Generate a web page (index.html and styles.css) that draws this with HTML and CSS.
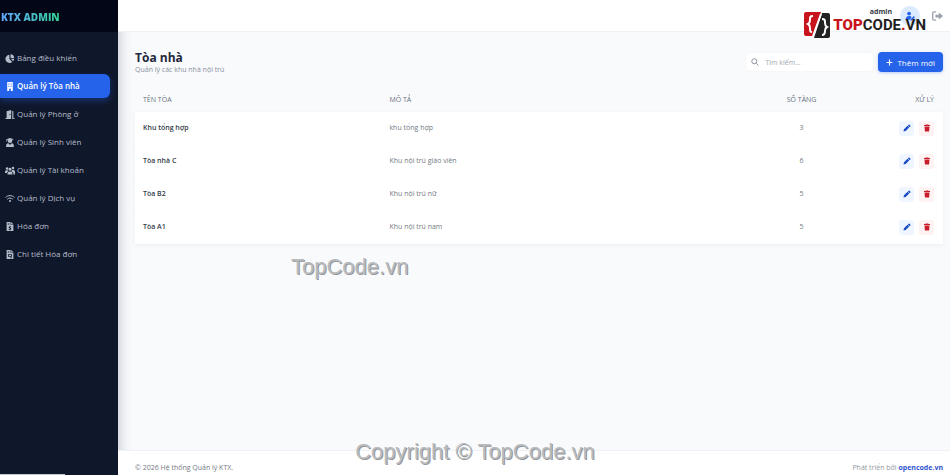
FILE: index.html
```html
<!DOCTYPE html>
<html lang="vi">
<head>
  <meta charset="UTF-8">
  <meta name="viewport" content="width=device-width, initial-scale=1.0">
  <title>KTX Admin</title>
  <link rel="stylesheet" href="styles.css">
</head>
<body>
  <!-- shared icons for the table rows -->
  <svg class="sprite" aria-hidden="true">
    <symbol id="pen" viewBox="0 0 16 16"><path d="M11.2 1.3a1.2 1.2 0 0 1 1.7 0l1.8 1.8a1.2 1.2 0 0 1 0 1.7l-1.5 1.5-3.5-3.5zM8.900 3.600l3.500 3.500-7 7L1 15l.900-4.400z"/></symbol>
    <symbol id="trash" viewBox="0 0 16 16"><path d="M5.500 1h5l.700 1H14v2H2V2h2.800zM3 5h10l-.700 9a1.500 1.500 0 0 1-1.500 1.200H5.200A1.500 1.500 0 0 1 3.700 14z"/></symbol>
  </svg>

  <div class="layout">
    <aside class="sidebar">
      <div class="brand"><span>KTX ADMIN</span></div>
      <nav class="menu">
        <a href="#" class="menu-item">
          <svg viewBox="0 0 16 16"><path d="M7 1.500V9l5 5A7.200 7.200 0 1 1 7 1.500zM9 .500A7 7 0 0 1 15.500 7H9zM9.500 8.500h6a7 7 0 0 1-2 4.500z"/></svg>
          Bảng điều khiển
        </a>
        <a href="#" class="menu-item active">
          <svg viewBox="0 0 16 16"><path fill-rule="evenodd" d="M3 0h10v16H9.500v-4h-3v4H3zM5 2.500v2h2v-2zm4 0v2h2v-2zM5 6.500v2h2v-2zm4 0v2h2v-2z"/></svg>
          Quản lý Tòa nhà
        </a>
        <a href="#" class="menu-item">
          <svg viewBox="0 0 16 16"><path fill-rule="evenodd" d="M2 2l8-2v16H0v-2h2zM7 7v2h1.500V7zM11 2h3v12h2v2h-4V4h-1z"/></svg>
          Quản lý Phòng ở
        </a>
        <a href="#" class="menu-item">
          <svg viewBox="0 0 16 16"><path d="M8 0l7 2-3 1v2a4 4 0 0 1-8 0V3l-1-.300V6H1.500V2zM5 9.500l3 3 3-3c3 .5 4 2.500 4 6.500H1c0-4 1-6 4-6.500z"/></svg>
          Quản lý Sinh viên
        </a>
        <a href="#" class="menu-item">
          <svg viewBox="0 0 20 16"><circle cx="4" cy="4" r="2.500"/><circle cx="10" cy="5.500" r="2.800"/><circle cx="16" cy="3" r="2.500"/><path d="M0 11c0-3 2-4 5-3.500L7 9c-2 1-3 3-3 4H0zM13 8c3-2 7-1 7 3v5h-3c0-4-1-5-4-6zM5 16c0-4 1-6 5-6s5 2 5 6z"/></svg>
          Quản lý Tài khoản
        </a>
        <a href="#" class="menu-item">
          <svg viewBox="0 0 20 16"><path class="stroke" d="M1 6c5-5 13-5 18 0M4.500 9.500c3-3 8-3 11 0"/><circle cx="10" cy="13" r="2"/></svg>
          Quản lý Dịch vụ
        </a>
        <a href="#" class="menu-item">
          <svg viewBox="0 0 16 16"><path fill-rule="evenodd" d="M2 0h7v5h5v11H2zM10 0l4 4h-4zM4 2v1h3V2zm0 2.500v1h3v-1zM7.300 7v1C5 8 5 11 7.500 11.500c1.500.300 1 1-.300 1L5.500 12v1.200l1.800.4V15h1.400v-1.400C11 13 11 10.500 8.500 10c-1.500-.300-1-.800 0-.800l1.500.3V8.300L8.700 8V7z"/></svg>
          Hóa đơn
        </a>
        <a href="#" class="menu-item">
          <svg viewBox="0 0 16 16"><path fill-rule="evenodd" d="M2 0h7v5h5v11H2zM10 0l4 4h-4zM4 2v1h3V2zm0 2.500v1h3v-1zM4.500 7.500V12h7V7.500zM6 9h4v1.500H6zM8 13.500v1h3.500v-1z"/></svg>
          Chi tiết Hóa đơn
        </a>
      </nav>
    </aside>

    <div class="main">
      <header class="topbar">
        <span class="user-name">admin</span>
        <span class="avatar">
          <svg viewBox="0 0 16 16"><circle cx="6.500" cy="4" r="3"/><path d="M1 14c0-4 2-6 5.500-6 2 0 3 .5 4 1.500L8 14zM9 13l5-5 2 2-5 5H9z"/></svg>
        </span>
        <button class="logout" aria-label="Đăng xuất">
          <svg viewBox="0 0 16 14"><path d="M6 1H3a2 2 0 0 0-2 2v8a2 2 0 0 0 2 2h3"/><path class="arrow" d="M5 5h5V2l6 5-6 5V9H5z"/></svg>
        </button>
      </header>

      <main class="content">
        <div class="page-head">
          <div>
            <h1>Tòa nhà</h1>
            <p>Quản lý các khu nhà nội trú</p>
          </div>
          <div class="tools">
            <label class="search">
              <svg viewBox="0 0 16 16"><circle cx="6.500" cy="6.500" r="5"/><path d="M10.500 10.500L15 15"/></svg>
              <input type="text" placeholder="Tìm kiếm..." aria-label="Tìm kiếm">
            </label>
            <button class="add">
              <svg viewBox="0 0 12 12"><path d="M6 1v10M1 6h10"/></svg>
              Thêm mới
            </button>
          </div>
        </div>

        <table class="buildings">
          <thead>
            <tr><th class="name">TÊN TÒA</th><th class="desc">MÔ TẢ</th><th class="floors">SỐ TẦNG</th><th class="actions">XỬ LÝ</th></tr>
          </thead>
          <tbody>
            <tr>
              <td class="name">Khu tổng hợp</td><td>khu tổng hợp</td><td class="floors">3</td>
              <td class="actions"><button class="edit" aria-label="Sửa"><svg><use href="#pen"/></svg></button><button class="delete" aria-label="Xóa"><svg><use href="#trash"/></svg></button></td>
            </tr>
            <tr>
              <td class="name">Tòa nhà C</td><td>Khu nội trú giáo viên</td><td class="floors">6</td>
              <td class="actions"><button class="edit" aria-label="Sửa"><svg><use href="#pen"/></svg></button><button class="delete" aria-label="Xóa"><svg><use href="#trash"/></svg></button></td>
            </tr>
            <tr>
              <td class="name">Tòa B2</td><td>Khu nội trú nữ</td><td class="floors">5</td>
              <td class="actions"><button class="edit" aria-label="Sửa"><svg><use href="#pen"/></svg></button><button class="delete" aria-label="Xóa"><svg><use href="#trash"/></svg></button></td>
            </tr>
            <tr>
              <td class="name">Tòa A1</td><td>Khu nội trú nam</td><td class="floors">5</td>
              <td class="actions"><button class="edit" aria-label="Sửa"><svg><use href="#pen"/></svg></button><button class="delete" aria-label="Xóa"><svg><use href="#trash"/></svg></button></td>
            </tr>
          </tbody>
        </table>
      </main>

      <footer class="footer">
        <span>© 2026 Hệ thống Quản lý KTX.</span>
        <span class="credit">Phát triển bởi <a href="#">opencode.vn</a></span>
      </footer>
    </div>
  </div>

  <div class="site-logo">
    <svg viewBox="0 0 26 26">
      <path fill="#c8141c" d="M2 0h15L9 24H2a2 2 0 0 1-2-2V2a2 2 0 0 1 2-2z"/>
      <path fill="#222" d="M18 1h6a2 2 0 0 1 2 2v21a2 2 0 0 1-2 2H10z"/>
      <path class="brace" d="M9 4C6 4 6 5 6 8c0 2 0 3-2 4 2 1 2 2 2 4 0 3 0 4 2 4M18 7c3 0 3 1 3 4 0 2 0 3 2 4-2 1-2 2-2 4 0 3-1 4-3 4M17 2L9 24"/>
    </svg>
    <span><b>TOP</b>CODE<b>.</b>VN</span>
  </div>
  <div class="watermark center">TopCode.vn</div>
  <div class="watermark bottom">Copyright © TopCode.vn</div>
  <div class="status-line"></div>
</body>
</html>
```

FILE: styles.css
```css
* {
  box-sizing: border-box;
}
body {
  margin: 0;
  font-family: "Open Sans", "Noto Sans", sans-serif;
  font-size: 8px;
  line-height: 12px;
  color: #747a84;
  background: #f8fafc;
}
button {
  font-family: inherit;
  border: none;
  padding: 0;
  cursor: pointer;
}
a {
  text-decoration: none;
}
.sprite {
  position: absolute;
  width: 0;
  height: 0;
}
.layout {
  display: flex;
  min-height: 100vh;
}

/* Sidebar */
.sidebar {
  width: 118px;
  flex-shrink: 0;
  background: #0f172a;
  box-shadow: 2px 0 12px rgba(15, 23, 42, 0.2);
}
.brand {
  height: 32px;
  padding: 9px 1px;
  background: #020617;
  font-size: 10px;
  line-height: 16px;
  font-weight: 800;
}
.brand span {
  background: linear-gradient(to right, #60a5fa, #34d399);
  background-clip: text;
  -webkit-background-clip: text;
  color: transparent;
}
.menu {
  display: flex;
  flex-direction: column;
  gap: 4px;
  padding: 14px 8px 0 0;
}
.menu-item {
  display: flex;
  align-items: center;
  gap: 2px;
  height: 24px;
  padding-left: 5px;
  color: #b6bdca;
  border-radius: 0 6px 6px 0;
}
.menu-item svg {
  width: 10px;
  height: 9px;
  fill: currentColor;
}
.menu-item .stroke {
  fill: none;
  stroke: currentColor;
  stroke-width: 2;
}
.menu-item.active {
  background: #2563eb;
  color: #fff;
  font-weight: 600;
  box-shadow: 0 3px 6px rgba(37, 99, 235, 0.35);
}

/* Main column */
.main {
  flex: 1;
  display: flex;
  flex-direction: column;
}
.topbar {
  display: flex;
  align-items: center;
  justify-content: flex-end;
  height: 32px;
  padding-right: 7px;
  background: #fff;
  border-bottom: 1px solid #eef1f5;
}
.user-name {
  align-self: flex-start;
  margin-top: 6px;
  margin-right: 8px;
  color: #333a46;
  font-size: 7px;
  font-weight: 700;
}
.avatar {
  display: flex;
  align-items: center;
  justify-content: center;
  width: 20px;
  height: 20px;
  margin-right: 12px;
  border-radius: 50%;
  background: #dbeafe;
}
.avatar svg {
  width: 10px;
  fill: #2563eb;
}
.logout {
  display: flex;
  background: none;
}
.logout svg {
  width: 11px;
  height: 10px;
  fill: none;
  stroke: #9ca3af;
  stroke-width: 2;
}
.logout .arrow {
  fill: #9ca3af;
  stroke: none;
}
.content {
  flex: 1;
  padding: 18px 7px 0 17px;
}
.page-head {
  display: flex;
  justify-content: space-between;
}
.page-head h1 {
  margin: 0;
  font-size: 12px;
  line-height: 16px;
  color: #1e293b;
}
.page-head p {
  margin: 0;
  font-size: 7px;
  line-height: 8px;
  color: #8a919c;
}
.tools {
  display: flex;
  gap: 4px;
  padding-top: 2px;
}
.search {
  display: flex;
  align-items: center;
  gap: 6px;
  width: 129px;
  height: 20px;
  padding-left: 5px;
  background: #fff;
  border: 1px solid #f5f7f9;
  border-radius: 4px;
}
.search svg {
  width: 8px;
  flex-shrink: 0;
  fill: none;
  stroke: #8f959f;
  stroke-width: 2;
}
.search input {
  width: 100%;
  min-width: 0;
  padding: 0;
  border: none;
  outline: none;
  background: none;
  font-family: inherit;
  font-size: 7px;
}
.search input::placeholder {
  color: #a3a8b0;
}
.add {
  display: flex;
  align-items: center;
  gap: 4px;
  height: 20px;
  padding: 0 8px;
  border-radius: 4px;
  background: #2563eb;
  color: #fff;
  font-size: 8px;
  font-weight: 500;
  box-shadow: 0 1px 3px rgba(37, 99, 235, 0.3);
}
.add svg {
  width: 7px;
  fill: none;
  stroke: #fff;
  stroke-width: 2;
}

/* Table */
.buildings {
  width: 100%;
  margin-top: 13px;
  table-layout: fixed;
  border-spacing: 0;
  font-size: 7px;
}
.buildings th {
  height: 25px;
  padding: 0 8px;
  text-align: left;
  font-weight: 500;
  color: #6b7280;
}
.buildings td {
  height: 33px;
  padding: 0 8px;
  background: #fff;
  border-bottom: 1px solid #fcfdfd;
}
.buildings tbody {
  box-shadow: 0 1px 4px rgba(15, 23, 42, 0.05);
}
.buildings th.name {
  width: 30.5%;
}
.buildings td.name {
  font-weight: 600;
  color: #343b47;
}
.buildings th.desc {
  width: 43.5%;
}
.buildings .floors {
  width: 17%;
  text-align: center;
}
.buildings .actions {
  padding-right: 9px;
  text-align: right;
}
.actions button {
  width: 15px;
  height: 15px;
  margin-left: 5px;
  border-radius: 3px;
  vertical-align: middle;
}
.actions svg {
  display: block;
  width: 8px;
  height: 8px;
  margin: 0 auto;
}
.edit {
  background: #eff6ff;
  fill: #1d4fc4;
}
.delete {
  background: #fef2f2;
  fill: #c81e2b;
}

/* Footer */
.footer {
  display: flex;
  justify-content: space-between;
  height: 25px;
  padding: 11px 7px 0 17px;
  background: #fff;
  border-top: 1px solid #eef1f5;
  font-size: 7px;
}
.credit {
  color: #9298a2;
}
.credit a {
  color: #2f55d0;
  font-weight: 700;
}

/* Overlays */
.site-logo {
  position: absolute;
  top: 12px;
  right: 24px;
  display: flex;
  align-items: center;
  gap: 3px;
  font-family: Roboto, sans-serif;
  font-size: 15px;
  line-height: 14px;
  font-weight: 700;
  color: #1f1f1f;
}
.site-logo svg {
  width: 26px;
  height: 26px;
}
.site-logo .brace {
  fill: none;
  stroke: #fff;
  stroke-width: 2;
}
.site-logo b {
  color: #c8141c;
}
.watermark {
  position: absolute;
  font-family: "Liberation Sans", Arial, sans-serif;
  font-size: 22px;
  line-height: 24px;
  color: #b9bbbd;
  text-shadow: 1px 1px 0 #92969b;
  white-space: nowrap;
}
.watermark.center {
  top: 255px;
  left: 291px;
}
.watermark.bottom {
  bottom: 11px;
  left: 50%;
  transform: translateX(-50%);
}
.status-line {
  position: absolute;
  left: 0;
  bottom: 0;
  width: 65px;
  height: 1px;
  background: #c5c8cd;
}
```
